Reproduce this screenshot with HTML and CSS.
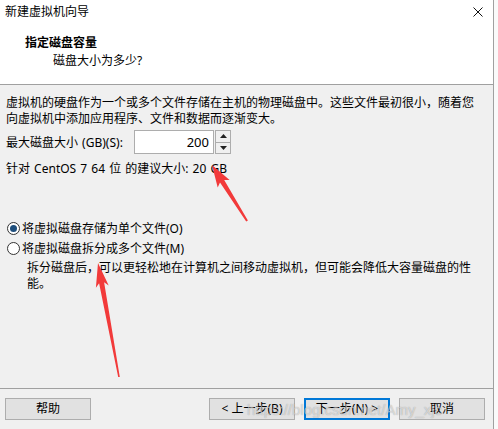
FILE: index.html
```html
<!DOCTYPE html>
<html>
<head>
    <meta charset="UTF-8">
    <title>新建虚拟机向导</title>
    <link rel="stylesheet" href="styles.css">
</head>
<body>
    <div class="wizard">
        <div class="header">
            <div class="titlebar">
                <span class="title">新建虚拟机向导</span>
                <svg class="close" viewBox="0 0 10 10">
                    <path d="M0.5 0.5 L9.5 9.5 M9.5 0.5 L0.5 9.5" stroke="#111" stroke-width="1"/>
                </svg>
            </div>
            <div class="heading">指定磁盘容量</div>
            <div class="subheading">磁盘大小为多少?</div>
        </div>

        <div class="content">
            <p class="intro">虚拟机的硬盘作为一个或多个文件存储在主机的物理磁盘中。这些文件最初很小，随着您<br>向虚拟机中添加应用程序、文件和数据而逐渐变大。</p>

            <div class="size-row">
                <label>最大磁盘大小 (GB)(S):</label>
                <div class="number-input">200</div>
                <div class="spinner">
                    <span class="spin-btn">
                        <svg viewBox="0 0 7 4"><path d="M3.5 0 L7 4 L0 4 Z" fill="#222"/></svg>
                    </span>
                    <span class="spin-btn">
                        <svg viewBox="0 0 7 4"><path d="M0 0 L7 0 L3.5 4 Z" fill="#222"/></svg>
                    </span>
                </div>
            </div>

            <div class="hint">针对 CentOS 7 64 位 的建议大小: 20 GB</div>

            <div class="options">
                <div class="radio-row">
                    <span class="radio checked"></span>
                    <span>将虚拟磁盘存储为单个文件(O)</span>
                </div>
                <div class="radio-row">
                    <span class="radio"></span>
                    <span>将虚拟磁盘拆分成多个文件(M)</span>
                </div>
                <p class="option-desc">拆分磁盘后，可以更轻松地在计算机之间移动虚拟机，但可能会降低大容量磁盘的性<br>能。</p>
            </div>
        </div>

        <div class="footer">
            <button class="btn">帮助</button>
            <div class="nav-buttons">
                <button class="btn">&lt; 上一步(B)</button>
                <button class="btn btn-default">下一步(N) &gt;</button>
                <button class="btn">取消</button>
            </div>
        </div>
    </div>

    <!-- annotation overlay -->
    <svg class="annotations" viewBox="0 0 498 429">
        <polygon points="212,165 217.7,187.4 220.0,182.5 246.2,221.5 247.9,220.5 224.2,179.9 229.6,180.0" fill="#f23a3a"/>
        <polygon points="98,263 95.9,287.8 99.1,283.2 118.2,377.1 119.8,376.9 104.1,282.2 108.7,285.4" fill="#f23a3a"/>
    </svg>
    <div class="watermark">https://blog.csdn.net/Amy_xjc</div>
</body>
</html>
```

FILE: styles.css
```css
* {
    margin: 0;
    padding: 0;
    box-sizing: border-box;
}

body {
    width: 498px;
    height: 429px;
    overflow: hidden;
    background: #fafafa;
    font-family: "Noto Sans", "Noto Sans CJK SC", sans-serif;
    font-size: 12px;
    color: #000;
    position: relative;
}

.wizard {
    width: 494px;
    height: 429px;
    background: #f0f0f0;
    border-right: 1px solid #a0a0a0;
    display: flex;
    flex-direction: column;
}

/* White header */
.header {
    background: #fff;
    height: 85px;
    border-bottom: 1px solid #a0a0a0;
}

.titlebar {
    height: 24px;
    display: flex;
    align-items: center;
    justify-content: space-between;
    padding: 0 10px 0 5px;
}

.title {
    line-height: 24px;
}

.close {
    width: 10px;
    height: 10px;
}

.heading {
    font-weight: bold;
    margin: 10px 0 0 25px;
    line-height: 18px;
}

.subheading {
    margin-left: 53px;
    line-height: 18px;
}

/* Main content */
.content {
    flex: 1;
    padding: 10px 6px 0 6px;
    border-bottom: 1px solid #a0a0a0;
}

.intro {
    line-height: 16px;
}

.size-row {
    display: flex;
    align-items: center;
    margin-top: 3px;
    height: 24px;
}

.size-row label {
    width: 128px;
    white-space: nowrap;
    word-spacing: 1px;
}

.number-input {
    width: 80px;
    height: 24px;
    background: #fff;
    border: 1px solid #adadad;
    text-align: right;
    padding-right: 4px;
    line-height: 22px;
    font-size: 13px;
}

.spinner {
    width: 16px;
    height: 24px;
    margin-left: 1px;
    border: 1px solid #adadad;
    display: flex;
    flex-direction: column;
}

.spin-btn {
    flex: 1;
    display: flex;
    align-items: center;
    justify-content: center;
    background: #f0f0f0;
}

.spin-btn:first-child {
    border-bottom: 1px solid #adadad;
}

.spin-btn svg {
    width: 7px;
    height: 4px;
}

.hint {
    margin-top: 7px;
    line-height: 16px;
    word-spacing: 1px;
}

.options {
    margin-top: 41px;
}

.radio-row {
    display: flex;
    align-items: center;
    height: 20px;
    gap: 2px;
}

.radio {
    width: 13px;
    height: 13px;
    margin-left: 1px;
    border: 1px solid #333;
    border-radius: 50%;
    background: #fff;
    position: relative;
}

.radio.checked::after {
    content: '';
    position: absolute;
    left: 2px;
    top: 2px;
    width: 7px;
    height: 7px;
    border-radius: 50%;
    background: #1e4e7c;
}

.option-desc {
    margin: 2px 0 0 21px;
    line-height: 16px;
}

/* Button row */
.footer {
    height: 40px;
    display: flex;
    align-items: flex-start;
    justify-content: space-between;
    padding: 9px 8px 0 5px;
}

.nav-buttons {
    display: flex;
    gap: 9px;
}

.btn {
    width: 86px;
    height: 22px;
    background: #e1e1e1;
    border: 1px solid #adadad;
    font-family: inherit;
    font-size: 12px;
    line-height: 18px;
    color: #000;
}

.btn-default {
    border: 2px solid #0078d7;
}

.annotations {
    position: absolute;
    left: 0;
    top: 0;
    width: 498px;
    height: 429px;
    pointer-events: none;
}

.watermark {
    position: absolute;
    left: 247px;
    top: 401px;
    font-family: "Liberation Sans", Arial, sans-serif;
    font-size: 15px;
    color: rgba(255, 255, 255, 0.55);
    text-shadow: 0 0 1px rgba(0, 0, 0, 0.35);
    pointer-events: none;
}
```
